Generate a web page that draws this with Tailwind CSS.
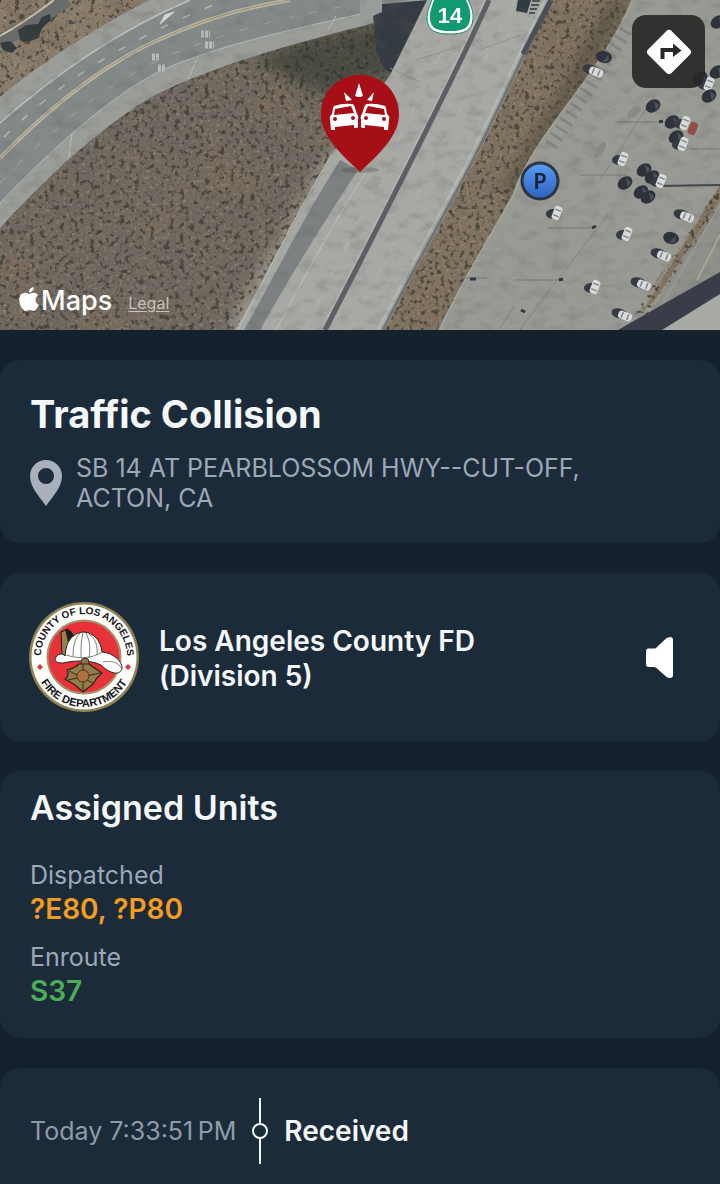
<!DOCTYPE html>
<html lang="en">
<head>
    <meta charset="UTF-8">
    <meta name="viewport" content="width=device-width, initial-scale=1.0">
    <title>Traffic Collision</title>
    <script src="https://cdn.jsdelivr.net/npm/@tailwindcss/browser@4"></script>
</head>
<body class="min-h-screen overflow-x-hidden bg-[#15212c] font-['Inter','Noto_Sans',sans-serif] text-[#f4f8fc]">
    <header class="relative h-[330px] overflow-hidden">
        <svg class="block h-full w-full" viewBox="0 0 720 330" preserveAspectRatio="xMidYMid slice" aria-hidden="true">
            <defs>
                <filter id="scrub" x="0" y="0" width="100%" height="100%" color-interpolation-filters="sRGB">
                    <feTurbulence type="fractalNoise" baseFrequency="0.2" numOctaves="3" seed="4" />
                    <feColorMatrix values="0 0 0 0 0.22  0 0 0 0 0.22  0 0 0 0 0.19  6 0 0 0 -3.3" />
                </filter>
                <filter id="dust" x="0" y="0" width="100%" height="100%" color-interpolation-filters="sRGB">
                    <feTurbulence type="fractalNoise" baseFrequency="0.3" numOctaves="3" seed="11" />
                    <feColorMatrix values="0 0 0 0 0.64  0 0 0 0 0.61  0 0 0 0 0.55  0 4 0 0 -2.2" />
                </filter>
                <filter id="patches" x="0" y="0" width="100%" height="100%" color-interpolation-filters="sRGB">
                    <feTurbulence type="fractalNoise" baseFrequency="0.02" numOctaves="3" seed="7" />
                    <feColorMatrix values="0 0 0 0 0.5  0 0 0 0 0.43  0 0 0 0 0.36  0 0 4 0 -1.9" />
                </filter>
                <filter id="grain" x="0" y="0" width="100%" height="100%" color-interpolation-filters="sRGB">
                    <feTurbulence type="fractalNoise" baseFrequency="0.06 0.1" numOctaves="4" seed="2" />
                    <feColorMatrix values="0 0 0 0 0.38  0 0 0 0 0.39  0 0 0 0 0.38  0 0 2 0 -0.95" />
                </filter>
                <filter id="soft"><feGaussianBlur stdDeviation="0.6" /></filter>
                <filter id="blur"><feGaussianBlur stdDeviation="7" /></filter>
                <clipPath id="verge">
                    <path d="M552 0H632C618 34 598 62 578 90C552 125 524 160 512 195C490 236 465 275 438 330H385C412 276 440 226 470 170C494 124 520 66 552 0Z" />
                    <path d="M0 0H150C105 22 45 60 0 97ZM720 185V205L655 305L645 330H625L650 290Z" />
                    <path d="M0 228C35 190 65 160 110 125C140 103 150 97 165 90C230 60 300 42 385 20L395 75L330 155L235 330H0Z" />
                </clipPath>
                <linearGradient id="parkingBlue" x1="0" y1="0" x2="0" y2="1">
                    <stop offset="0" stop-color="#5b9cf0" />
                    <stop offset="1" stop-color="#2b62c0" />
                </linearGradient>
                <g id="car">
                    <ellipse cx="-4" cy="1" rx="7" ry="5" fill="#343a40" />
                    <rect x="-4" y="-7" width="8" height="14" rx="3" fill="#d9dbda" transform="rotate(22)" />
                    <path d="M-3 -3H3M-3 3H3" stroke="#7b848b" stroke-width="1.5" transform="rotate(22)" />
                </g>
                <g id="carFlat">
                    <ellipse cx="-6" cy="-1" rx="8" ry="5" fill="#343a40" transform="rotate(15)" />
                    <rect x="-4" y="-7" width="8" height="14" rx="3" fill="#d9dbda" transform="rotate(-68)" />
                    <path d="M-3 -3H3M-3 3H3" stroke="#7b848b" stroke-width="1.5" transform="rotate(-68)" />
                </g>
                <g id="darkCar">
                    <ellipse rx="8" ry="6" fill="#2d333b" transform="rotate(-35)" />
                    <path d="M1 -5L6 -1L3 5Z" fill="#49525d" />
                </g>
            </defs>

            <!-- parking lot -->
            <rect width="720" height="330" fill="#999a94" />

            <!-- scrub and verges -->
            <path d="M0 228C35 190 65 160 110 125C140 103 150 97 165 90C230 60 300 42 385 20L395 75L330 155L235 330H0Z" fill="#70685f" />
            <path d="M0 0H150C105 22 45 60 0 97Z" fill="#8b7d6b" />
            <path d="M552 0H632C618 34 598 62 578 90C552 125 524 160 512 195C490 236 465 275 438 330H385C412 276 440 226 470 170C494 124 520 66 552 0Z" fill="#81735f" />
            <path d="M720 200L655 305L640 330H720Z" fill="#8f908a" />
            <path d="M720 185V200L655 300L640 315Z" fill="#857661" />
            <g clip-path="url(#verge)">
                <path d="M395 110L330 150L225 330H275L345 170Z" fill="#9b958a" filter="url(#blur)" />
                <rect width="720" height="330" filter="url(#patches)" opacity="0.5" />
                <rect width="720" height="330" filter="url(#dust)" opacity="0.5" />
                <rect width="720" height="330" filter="url(#scrub)" opacity="0.75" />
                <path d="M255 60Q310 30 390 25L395 75L330 95L290 80Z" fill="#2b3126" opacity="0.55" filter="url(#blur)" />
                <path d="M632 0L578 90L512 195L500 190L560 90L610 0Z" fill="#4a443a" opacity="0.6" filter="url(#blur)" />
            </g>

            <g filter="url(#soft)">
                <!-- access road, top left corner -->
                <path d="M0 42C35 22 50 10 68 0" fill="none" stroke="#6b6c6c" stroke-width="14" />
                <path d="M0 36C25 22 38 12 54 0" fill="none" stroke="#cdc3b0" stroke-width="2" />
                <path d="M18 30L26 25L38 24L42 17L50 14L51 20L42 28L38 38L28 42L20 40Z" fill="#333b3c" />
                <path d="M0 43L10 41L17 48L12 53L3 50Z" fill="#333b3c" />

                <!-- curved road -->
                <path d="M0 97C45 60 105 22 150 0H427L385 20C300 42 230 60 165 90C150 97 140 103 110 125C65 160 35 190 0 228Z" fill="#9a9d98" />
                <path d="M0 123C60 70 120 30 190 0H408L360 14C290 30 215 46 160 71C105 99 45 156 0 203Z" fill="#84898a" />
                <path d="M0 123C60 70 120 30 190 0" fill="none" stroke="#bcc0be" stroke-width="1.5" />
                <path d="M0 203C45 156 105 99 160 71C215 46 290 30 360 14" fill="none" stroke="#b4b9b7" stroke-width="1" />
                <path d="M0 158C50 107 105 62 165 37C215 15 250 7 290 0" fill="none" stroke="#bdb69f" stroke-width="4" />
                <path d="M0 158C50 107 105 62 165 37C215 15 250 7 290 0" fill="none" stroke="#938e7d" stroke-width="1" />
                <path d="M4 137C60 82 120 43 218 3" fill="none" stroke="#b4b9b7" stroke-width="1.5" stroke-dasharray="8 16" />
                <path d="M0 183C55 126 105 84 170 55C220 34 280 18 345 6" fill="none" stroke="#a0a6a4" stroke-width="1" stroke-dasharray="8 16" />
                <path d="M72 133L69 157M198 57L188 79M336 16L328 30" stroke="#b7bbb7" stroke-width="1" />
                <path d="M174 12L160 24L165 15Z" fill="#d4d7d4" stroke="#d4d7d4" stroke-width="1" />
                <g fill="none" stroke="#b9bdb9" stroke-dasharray="3 1">
                    <path d="M152 57H160M158 68H166M201 34H210M205 45H214" stroke-width="7" />
                </g>

                <!-- freeway -->
                <path d="M372 5L428 0L393 75L384 68L376 50L374 25Z" fill="#343a43" />
                <path d="M360 0H382V12L360 22Z" fill="#989d9b" />
                <path d="M427 0H552C520 66 494 124 470 170C440 226 412 276 385 330H235C270 270 300 210 330 160L390 75Z" fill="#a8a9a4" />
                <path d="M340 160L358 170C325 220 288 280 260 330H244C275 275 305 215 340 160Z" fill="#7d8181" />
                <path d="M332 155C300 205 272 265 238 330M366 172C332 225 300 285 276 330" fill="none" stroke="#bfc1bc" stroke-width="1" />
                <path d="M489 0C457 72 409 165 360 262L325 330" fill="none" stroke="#5b6164" stroke-width="5" />
                <path d="M485 0C453 72 405 165 356 262L321 330" fill="none" stroke="#bcbdb8" stroke-width="1" />
                <path d="M550 0C518 66 492 124 468 170C438 226 410 276 383 330" fill="none" stroke="#707677" stroke-width="3" />
                <path d="M545 0C513 66 487 124 463 170C433 226 405 276 378 330" fill="none" stroke="#b7b9b5" stroke-width="2" />
                <path d="M551 0L523 54" stroke="#485058" stroke-width="5" />
                <g fill="none" stroke="#b5b7b1" stroke-width="1" stroke-dasharray="12 18">
                    <path d="M455 25L305 330M515 0L350 330" />
                </g>
                <path d="M390 68L420 82M415 60L455 48M480 50L520 35" stroke="#8f938f" stroke-width="1" />
                <path d="M518 0H531L527 13L516 11Z" fill="#2f3740" />
                <path d="M532 1H540M531 5H539M530 9H537M529 13H535" stroke="#4b535a" stroke-width="2" />

                <!-- parking lot markings and shadows -->
                <path d="M632 0C618 34 598 62 578 90C552 125 524 160 514 195C490 236 465 275 440 330" fill="none" stroke="#adada5" stroke-width="1" />
                <path d="M626 30L548 150" stroke="#6c6f6c" stroke-width="14" stroke-dasharray="3 6" opacity="0.45" />
                <path d="M617 122H660M580 175H626M548 228H592M515 280H560M690 149H720M462 278H486" stroke="#757976" stroke-width="1" />
                <path d="M655 186L720 185" stroke="#3f4448" stroke-width="2" />
                <path d="M608 215L542 300L520 330M655 95L600 180M515 305L500 328" fill="none" stroke="#82857f" stroke-width="1" />
                <path d="M592 228L596 226M559 280L563 279M659 122L663 121M470 279H476M521 310L525 312" stroke="#30353a" stroke-width="3" />
                <g fill="#7d817d" opacity="0.6" filter="url(#soft)">
                    <ellipse cx="600" cy="150" rx="9" ry="4" transform="rotate(-55 600 150)" />
                    <ellipse cx="634" cy="112" rx="8" ry="4" transform="rotate(-40 634 112)" />
                </g>
            </g>
            <rect width="720" height="330" filter="url(#grain)" opacity="0.35" />

            <!-- parked cars -->
            <g filter="url(#soft)">
                <use href="#darkCar" transform="translate(604 57) rotate(50)" />
                <use href="#carFlat" x="596" y="72" />
                <use href="#darkCar" x="653" y="106" />
                <use href="#darkCar" x="672" y="122" />
                <use href="#darkCar" x="676" y="137" />
                <use href="#car" x="685" y="123" />
                <rect x="689" y="122" width="8" height="13" rx="3" fill="#8e4f46" transform="rotate(22 693 128)" />
                <use href="#car" x="683" y="144" />
                <use href="#car" x="623" y="159" />
                <use href="#darkCar" x="644" y="170" />
                <use href="#darkCar" x="652" y="177" />
                <use href="#darkCar" x="625" y="183" />
                <use href="#darkCar" x="641" y="192" />
                <use href="#darkCar" x="648" y="197" />
                <use href="#car" x="661" y="181" />
                <use href="#car" x="557" y="213" />
                <use href="#car" x="627" y="234" />
                <use href="#car" x="595" y="287" />
                <use href="#carFlat" x="687" y="217" />
                <use href="#darkCar" transform="translate(671 238) rotate(50)" />
                <use href="#carFlat" x="664" y="256" />
                <use href="#carFlat" x="644" y="285" />
                <use href="#carFlat" x="625" y="316" />
                <use href="#darkCar" x="718" y="22" />
                <use href="#darkCar" x="700" y="78" />
                <use href="#darkCar" x="717" y="72" />
                <use href="#car" x="709" y="84" />
                <use href="#darkCar" x="709" y="96" />
                <path d="M720 205L662 305" stroke="#a2a39c" stroke-width="1" />
                <path d="M720 235L697 280" stroke="#aba28e" stroke-width="2" />
                <path d="M720 272L660 306L618 330H664L720 296Z" fill="#383e47" />
                <path d="M720 294L662 330H720Z" fill="#a8aaa6" />
            </g>

            <!-- route shield -->
            <path d="M434 -8H466C468 3 474 8 473 19C472 31 464 34 450 34C436 34 428 31 427 19C427 8 432 3 434 -8Z" fill="#fff" stroke="#159365" stroke-width="1" />
            <path d="M436 -8H464C466 4 472 9 470 19C469 29 462 31 450 31C438 31 431 29 430 19C429 9 434 4 436 -8Z" fill="#119a70" />
            <text x="450" y="23" text-anchor="middle" fill="#fff" font-size="22" font-weight="700" font-family="Liberation Sans, sans-serif">14</text>

            <!-- parking marker -->
            <circle cx="540" cy="181" r="18" fill="url(#parkingBlue)" stroke="#2c3540" stroke-width="3" />
            <text x="540" y="189" text-anchor="middle" fill="#14233a" font-size="22" font-weight="600" font-family="Noto Sans, sans-serif">P</text>
        </svg>

        <!-- incident pin -->
        <svg class="absolute left-1/2 top-[74px] h-[100px] w-20 -translate-x-1/2" viewBox="0 -1 80 100" role="img" aria-label="Traffic collision">
            <ellipse cx="40" cy="95" rx="19" ry="3" fill="#333" opacity="0.25" />
            <path d="M40 0C18 0 1 17 1 39C1 61 21 79 40 97C59 79 79 61 79 39C79 17 62 0 40 0Z" fill="#a60f16" />
            <path d="M39 8L35 21Q39 23 43 21ZM24 17L26 26L32 25ZM54 17L47 25L52 26Z" fill="#fff" />
            <g id="crash">
                <path d="M14 31Q23 28 32 29Q34 29 35 33L37 39Q39 41 38 45V52Q38 53 34 53V50L15 52V55H11L10 45Q9 41 12 39L13 33Z" fill="#fff" />
                <path d="M15 34L31 31L34 38L14 40Z" fill="#a60f16" />
                <circle cx="15" cy="44" r="2" fill="#a60f16" />
                <circle cx="33" cy="43" r="2" fill="#a60f16" />
            </g>
            <use href="#crash" transform="translate(79) scale(-1 1)" />
        </svg>

        <button type="button" aria-label="Directions" class="absolute right-[15px] top-[15px] flex size-[73px] items-center justify-center rounded-[14px] bg-[#272625]/90">
            <svg class="size-12" viewBox="0 0 48 48">
                <path d="M22 2.500Q24 1 26 2.500L45.500 22Q47 24 45.500 26L26 45.500Q24 47 22 45.500L2.500 26Q1 24 2.500 22Z" fill="#fff" />
                <path d="M17.500 31V22H29" fill="none" stroke="#292827" stroke-width="4" />
                <path d="M28 15.500L36.500 22.500L28 29Z" fill="#292827" />
            </svg>
        </button>

        <div class="absolute bottom-[11px] left-[17px] flex items-center text-white">
            <svg class="mb-1 size-6" viewBox="0 0 24 24" fill="currentColor" aria-hidden="true">
                <path d="M12.152 6.896c-.948 0-2.415-1.078-3.96-1.04-2.04.027-3.91 1.183-4.961 3.014-2.117 3.675-.546 9.103 1.519 12.09 1.013 1.454 2.208 3.09 3.792 3.039 1.52-.065 2.09-.987 3.935-.987 1.831 0 2.35.987 3.96.948 1.637-.026 2.676-1.48 3.676-2.948 1.156-1.688 1.636-3.325 1.662-3.415-.039-.013-3.182-1.221-3.22-4.857-.026-3.04 2.48-4.494 2.597-4.559-1.429-2.09-3.623-2.324-4.39-2.376-2-.156-3.675 1.09-4.61 1.09zM15.53 3.83c.843-1.012 1.4-2.427 1.245-3.83-1.207.052-2.662.805-3.532 1.818-.78.896-1.454 2.338-1.273 3.714 1.338.104 2.715-.688 3.559-1.701" />
            </svg>
            <span class="text-[27px] leading-9 font-medium">Maps</span>
            <a href="#" class="ml-4 pt-1 text-[16px] leading-6 text-[#c6c2bb] underline underline-offset-2">Legal</a>
        </div>
    </header>

    <main class="flex flex-col gap-[30px] pt-[30px]">
        <section class="rounded-[20px] bg-[#1c2b3a] p-[30px]">
            <h1 class="text-[38px] leading-[48px] font-bold">Traffic Collision</h1>
            <div class="mt-[15px] flex items-center gap-[14px] text-[#9ca8b6]">
                <svg class="h-[46px] w-8 shrink-0" viewBox="0 0 32 46" aria-hidden="true">
                    <path fill="#a9b0bb" fill-rule="evenodd" d="M16 0C7 0 0 7 0 16C0 27 9 36 16 46C23 36 32 27 32 16C32 7 25 0 16 0ZM16 8A8 8 0 1 1 16 24A8 8 0 1 1 16 8Z" />
                </svg>
                <p class="max-w-[540px] text-[25px] leading-[30px]">SB 14 AT PEARBLOSSOM HWY--CUT-OFF, ACTON, CA</p>
            </div>
        </section>

        <section class="flex items-center rounded-[20px] bg-[#1c2b3a] px-[29px] py-[29px]">
            <svg class="size-[110px] shrink-0" viewBox="0 0 110 110" role="img" aria-label="County of Los Angeles Fire Department">
                <defs>
                    <path id="sealTop" d="M55 98A43 43 0 0 1 55 12A43 43 0 0 1 55 98" />
                    <path id="sealBottom" d="M55 5A50 50 0 0 0 55 105A50 50 0 0 0 55 5" />
                </defs>
                <circle cx="55" cy="55" r="55" fill="#8f8253" />
                <circle cx="55" cy="55" r="52.500" fill="#fdfdfb" />
                <circle cx="55" cy="55" r="36.500" fill="#e63238" stroke="#a3936b" stroke-width="2" />
                <g fill="#15161a" font-family="Liberation Sans, sans-serif" font-weight="700" text-anchor="middle">
                    <text font-size="10"><textPath href="#sealTop" startOffset="50%">COUNTY OF LOS ANGELES</textPath></text>
                    <text font-size="11"><textPath href="#sealBottom" startOffset="50%">FIRE DEPARTMENT</textPath></text>
                </g>
                <path d="M11 62L14 65L11 68L8 65ZM99 62L102 65L99 68L96 65Z" fill="#d8343c" />
                <!-- helmet -->
                <path d="M32 30L39 27L45 34L38 58L33 52Z" fill="#97814f" stroke="#1c1a17" stroke-width="1" />
                <path d="M36 27L42 29L45 34L39 40Z" fill="#1d1c1a" />
                <path d="M26 57C28 51 34 51 36 54L37 47C39 36 47 30 55 30C65 31 72 39 73 50C85 51 94 60 93 67C90 75 79 70 72 63C60 57 42 59 34 61C29 61 26 60 26 57Z" fill="#fff" stroke="#27231e" stroke-width="1" />
                <path d="M37 53C50 57 62 57 73 50M44 54C44 44 46 36 51 31M52 56C52 46 52 38 54 31M60 56C62 44 60 37 57 31M68 53C69 43 66 36 60 32" fill="none" stroke="#5f5d59" stroke-width="0.800" />
                <path d="M74 60C83 58 90 61 92 66" fill="none" stroke="#8b836d" stroke-width="1" />
                <!-- maltese badge -->
                <circle cx="56" cy="60" r="4" fill="#8c7746" stroke="#211d16" stroke-width="0.800" />
                <path d="M38 68Q46 66 50 62H60Q65 66 73 71Q67 76 64 82L54 90L46 83L36 77Q41 74 38 68Z" fill="#937c4b" stroke="#292319" stroke-width="1.200" />
                <path d="M40 69L64 81M71 71L39 78M54 62L54 89" stroke="#332b1e" stroke-width="1" />
                <circle cx="54" cy="74" r="6" fill="#b0713f" stroke="#4a3820" stroke-width="1" />
            </svg>
            <h2 class="ml-5 max-w-[360px] pt-[3px] text-[28px] leading-[35px] font-semibold">Los Angeles County FD (Division 5)</h2>
            <button type="button" aria-label="Listen" class="ml-auto mr-[18px] shrink-0">
                <svg class="h-[41px] w-[27px]" viewBox="0 0 27 41" fill="#fff">
                    <path d="M2 11.500H8Q10 11.500 11 10L20 1.500Q22 0 24 0Q27 0 27 3V38Q27 41 24 41Q22 41 20 39.500L11 31.500Q10 30 8 30H3Q0 30 0 27V14Q0 11.500 2 11.500Z" />
                </svg>
            </button>
        </section>

        <section class="rounded-[20px] bg-[#1c2b3a] px-[30px] pt-[15px] pb-[30px]">
            <h2 class="text-[34px] leading-[44px] font-semibold">Assigned Units</h2>
            <dl class="mt-7 text-[25px] leading-[34px]">
                <dt class="text-[#9ca8b6]">Dispatched</dt>
                <dd class="text-[28px] font-semibold text-[#f49b20]">?E80, ?P80</dd>
                <dt class="mt-[14px] text-[#9ca8b6]">Enroute</dt>
                <dd class="text-[28px] font-semibold text-[#4caf58]">S37</dd>
            </dl>
        </section>

        <section class="rounded-t-[20px] bg-[#1c2b3a] px-[30px] pt-[30px] pb-5">
            <ol>
                <li class="flex items-center">
                    <time class="text-[25px] leading-[34px] whitespace-nowrap text-[#8f9baa]">Today 7:33:51&#8239;PM</time>
                    <svg class="mx-4 h-[66px] w-4 shrink-0" viewBox="0 0 16 66" fill="none" stroke="#f4f8fc" stroke-width="2" aria-hidden="true">
                        <path d="M8 0V25M8 40V66" />
                        <circle cx="8" cy="33" r="7" />
                    </svg>
                    <strong class="text-[28px] leading-[34px] font-semibold">Received</strong>
                </li>
            </ol>
        </section>
    </main>
</body>
</html>
